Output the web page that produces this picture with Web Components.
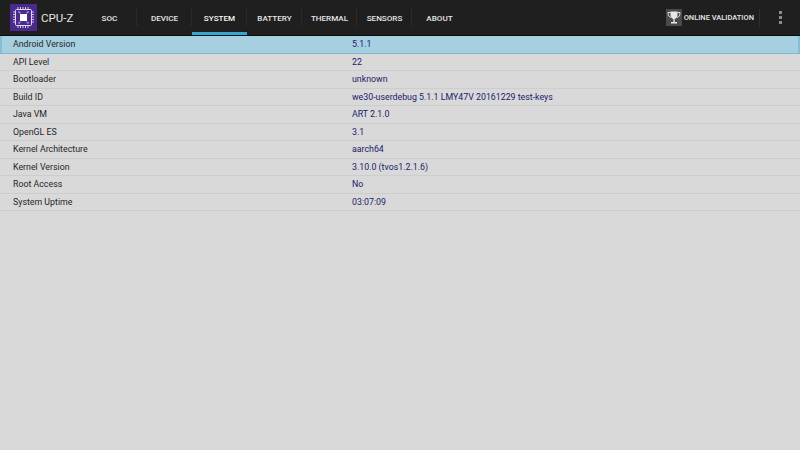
<!DOCTYPE html>
<html>
<head>
<meta charset="utf-8">
<style>
  html, body { margin: 0; padding: 0; }
  body { width: 800px; height: 450px; overflow: hidden; background: #d9d9d9; font-family: Roboto, sans-serif; }
</style>
</head>
<body>
<cz-app>
  <cz-toolbar slot="bar">
    <cz-tab>SOC</cz-tab>
    <cz-tab>DEVICE</cz-tab>
    <cz-tab active>SYSTEM</cz-tab>
    <cz-tab>BATTERY</cz-tab>
    <cz-tab>THERMAL</cz-tab>
    <cz-tab>SENSORS</cz-tab>
    <cz-tab last>ABOUT</cz-tab>
  </cz-toolbar>
  <cz-row selected label="Android Version" value="5.1.1"></cz-row>
  <cz-row label="API Level" value="22"></cz-row>
  <cz-row label="Bootloader" value="unknown"></cz-row>
  <cz-row label="Build ID" value="we30-userdebug 5.1.1 LMY47V 20161229 test-keys"></cz-row>
  <cz-row label="Java VM" value="ART 2.1.0"></cz-row>
  <cz-row label="OpenGL ES" value="3.1"></cz-row>
  <cz-row label="Kernel Architecture" value="aarch64"></cz-row>
  <cz-row label="Kernel Version" value="3.10.0 (tvos1.2.1.6)"></cz-row>
  <cz-row label="Root Access" value="No"></cz-row>
  <cz-row label="System Uptime" value="03:07:09"></cz-row>
</cz-app>

<script>
class CzApp extends HTMLElement {
  constructor() {
    super();
    this.attachShadow({ mode: 'open' });
    this.shadowRoot.innerHTML = `
      <style>
        :host { display: flex; flex-direction: column; width: 800px; height: 450px; background: #d9d9d9; }
        .list { display: flex; flex-direction: column; }
      </style>
      <slot name="bar"></slot>
      <div class="list"><slot></slot></div>
    `;
  }
}

class CzToolbar extends HTMLElement {
  constructor() {
    super();
    this.attachShadow({ mode: 'open' });
    this.shadowRoot.innerHTML = `
      <style>
        :host { display: flex; align-items: stretch; height: 35px; background: #1f1f1f; border-bottom: 1px solid #0d0d0d; color: #fff; }
        .brand { display: flex; align-items: center; width: 82px; flex: none; padding-left: 10px; box-sizing: border-box; gap: 4px; }
        .logo { width: 27px; height: 27px; display: block; flex: none; }
        .name { font-size: 11.5px; color: #e6e6e6; padding-top: 1px; }
        .tabs { display: flex; align-items: stretch; flex: 1; }
        .validate { display: flex; align-items: center; gap: 2px; padding-right: 5px; height: 18px; align-self: center; border-right: 1px solid #2e2e2e; }
        .trophy { width: 16px; height: 17px; display: block; }
        .validate span { font-size: 7.5px; font-weight: 500; color: #e8e8e8; }
        .more { width: 40px; display: flex; flex-direction: column; align-items: center; justify-content: center; gap: 2px; }
        .more i { display: block; width: 3px; height: 3px; background: #8c8c8c; }
      </style>
      <div class="brand">
        <svg class="logo" viewBox="0 0 27 27">
          <rect width="27" height="27" fill="#4a2a8c"/>
          <rect x="5.5" y="5.5" width="16" height="16" rx="1" fill="#4a2a8c" stroke="#e4dcf2" stroke-width="1"/>
          <rect x="10" y="10" width="7" height="7" fill="#fff"/>
          <path d="M8 3v2.500M10.500 3v2.500M13 3v2.500M15.500 3v2.500M18 3v2.500M8 21.500v2.500M10.500 21.500v2.500M13 21.500v2.500M15.500 21.500v2.500M18 21.500v2.500M3 8h2.500M3 10.500h2.500M3 13h2.500M3 15.500h2.500M3 18h2.500M21.500 8h2.500M21.500 10.500h2.500M21.500 13h2.500M21.500 15.500h2.500M21.500 18h2.500" stroke="#cfc3e8" stroke-width="1"/>
          <path d="M8 8h2v1.500M19 8h-2v1.500M8 19h2v-1.500M19 19h-2v-1.500" fill="none" stroke="#cfc3e8" stroke-width="0.8"/>
        </svg>
        <span class="name">CPU-Z</span>
      </div>
      <div class="tabs"><slot></slot></div>
      <div class="validate">
        <svg class="trophy" viewBox="0 0 16 17">
          <rect width="16" height="17" fill="#4a4a4a"/>
          <path d="M4.500 2.500h7v3.500c0 2.300-1.500 4-3.500 4s-3.500-1.700-3.500-4z" fill="#e8e8e8"/>
          <path d="M4.500 3.500h-2.500c0 3 1 4.500 3 5M11.500 3.500h2.500c0 3-1 4.500-3 5" fill="none" stroke="#e0e0e0" stroke-width="1"/>
          <rect x="7.3" y="10" width="1.4" height="3" fill="#e0e0e0"/>
          <rect x="5" y="13" width="6" height="1.5" fill="#e8e8e8"/>
        </svg>
        <span>ONLINE VALIDATION</span>
      </div>
      <div class="more"><i></i><i></i><i></i></div>
    `;
  }
}

class CzTab extends HTMLElement {
  constructor() {
    super();
    this.attachShadow({ mode: 'open' });
    this.shadowRoot.innerHTML = `
      <style>
        :host { display: flex; align-items: center; justify-content: center; position: relative; box-sizing: border-box; width: 55px; font-size: 8.1px; font-weight: 500; color: #e6e6e6; }
        :host([active]) { color: #f6f6f6; }
        :host([active])::after { content: ""; position: absolute; left: 0; right: 0; bottom: 0; height: 3px; background: #33a5cf; }
        :host(:not([last]))::before { content: ""; position: absolute; right: 0; top: 8px; height: 18px; width: 1px; background: #2a2a2a; }
      </style>
      <slot></slot>
    `;
  }
}

class CzRow extends HTMLElement {
  constructor() {
    super();
    this.attachShadow({ mode: 'open' });
    const label = this.getAttribute('label') || '';
    const value = this.getAttribute('value') || '';
    this.shadowRoot.innerHTML = `
      <style>
        :host { display: grid; grid-template-columns: 352px 1fr; align-items: center; height: 17.5px; box-sizing: border-box; border-bottom: 1px solid #cdcdcd; font-size: 8.8px; }
        :host([selected]) { background: #a6cfe0; border-bottom: 1px solid #7fb6cf; box-shadow: inset 2px 0 0 #86bdd6, inset -2px 0 0 #86bdd6; }
        .label { padding-left: 13px; color: #262626; }
        .value { color: #1a1a6e; }
      </style>
      <div class="label">${label}</div>
      <div class="value">${value}</div>
    `;
  }
}

customElements.define('cz-app', CzApp);
customElements.define('cz-toolbar', CzToolbar);
customElements.define('cz-tab', CzTab);
customElements.define('cz-row', CzRow);
</script>
</body>
</html>
